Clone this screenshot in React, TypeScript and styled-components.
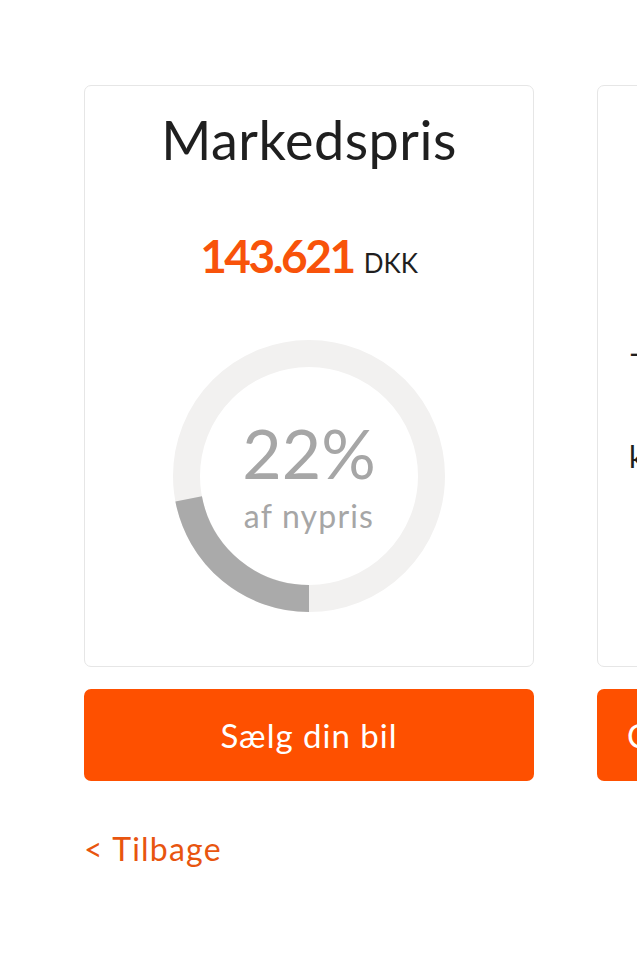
import styled, { createGlobalStyle } from "styled-components";

const GlobalStyle = createGlobalStyle`
  html, body {
    margin: 0;
    padding: 0;
    background: #ffffff;
    overflow: hidden;
  }
  * {
    box-sizing: border-box;
  }
`;

const orange = "#fe5000";

type DonutProps = {
  percent: number;
};

function Donut({ percent }: DonutProps) {
  const size = 272;
  const stroke = 27;
  const r = (size - stroke) / 2;
  const c = 2 * Math.PI * r;
  const filled = (percent / 100) * c;
  return (
    <DonutWrap>
      <svg width={size} height={size} viewBox={`0 0 ${size} ${size}`}>
        <circle
          cx={size / 2}
          cy={size / 2}
          r={r}
          fill="none"
          stroke="#f2f1f0"
          strokeWidth={stroke}
        />
        <circle
          cx={size / 2}
          cy={size / 2}
          r={r}
          fill="none"
          stroke="#aaaaaa"
          strokeWidth={stroke}
          strokeDasharray={`${filled} ${c}`}
          transform={`rotate(90 ${size / 2} ${size / 2})`}
        />
      </svg>
      <DonutLabel>
        <Percent>{percent}%</Percent>
        <Sub>af nypris</Sub>
      </DonutLabel>
    </DonutWrap>
  );
}

function App() {
  return (
    <Page>
      <GlobalStyle />
      <Slider>
        <Column>
          <Card>
            <Title>Markedspris</Title>
            <Price>
              <Amount>143.621</Amount>
              <Currency>DKK</Currency>
            </Price>
            <Donut percent={22} />
          </Card>
          <Button>Sælg din bil</Button>
        </Column>
        <Column>
          <Card>
            <Note $top={228}>- </Note>
            <Note $top={72}>kan vi hjælpe dig</Note>
          </Card>
          <Button $align="left">Check din bil</Button>
        </Column>
      </Slider>
      <Back>&lt; Tilbage</Back>
    </Page>
  );
}

const Page = styled.div`
  width: 637px;
  height: 960px;
  padding: 85px 0 0 84px;
  font-family: "Lato", "Open Sans", sans-serif;
  overflow: hidden;
`;

const Slider = styled.div`
  display: flex;
  gap: 63px;
  width: 1000px;
`;

const Column = styled.div`
  display: flex;
  flex-direction: column;
  gap: 22px;
  width: 450px;
  flex-shrink: 0;
`;

const Card = styled.div`
  height: 582px;
  border: 1.5px solid #e6e6e6;
  border-radius: 7px;
  background: #fff;
  display: flex;
  flex-direction: column;
  align-items: center;
  padding-top: 22px;
`;

const Title = styled.h1`
  margin: 0;
  font-size: 54px;
  line-height: 64px;
  font-weight: 400;
  color: #1f1f1f;
  letter-spacing: 0.5px;
`;

const Price = styled.div`
  margin-top: 56px;
  display: flex;
  align-items: baseline;
  gap: 10px;
  height: 56px;
`;

const Amount = styled.span`
  font-size: 46px;
  font-weight: 700;
  color: #f8530a;
  letter-spacing: -2.5px;
`;

const Currency = styled.span`
  font-size: 26px;
  color: #1f1f1f;
  font-weight: 400;
`;

const DonutWrap = styled.div`
  margin-top: 56px;
  position: relative;
  width: 272px;
  height: 272px;
`;

const DonutLabel = styled.div`
  position: absolute;
  inset: 0;
  display: flex;
  flex-direction: column;
  align-items: center;
  justify-content: center;
  gap: 7px;
  color: #a6a6a6;
`;

const Percent = styled.div`
  font-size: 68px;
  line-height: 72px;
  font-weight: 400;
`;

const Sub = styled.div`
  font-size: 32px;
  line-height: 40px;
  letter-spacing: 1.2px;
`;

const Note = styled.div<{ $top: number }>`
  align-self: flex-start;
  margin-top: ${(p) => p.$top}px;
  padding-left: 31px;
  font-size: 30px;
  line-height: 32px;
  color: #1f1f1f;
  white-space: nowrap;
`;

const Button = styled.div<{ $align?: string }>`
  height: 92px;
  border-radius: 7px;
  background: ${orange};
  color: #fff;
  font-size: 33px;
  display: flex;
  align-items: center;
  justify-content: ${(p) => (p.$align === "left" ? "flex-start" : "center")};
  padding-left: ${(p) => (p.$align === "left" ? "30px" : "0")};
  letter-spacing: 1px;
`;

const Back = styled.a`
  display: inline-block;
  margin-top: 48px;
  font-size: 32px;
  color: #e8550f;
  letter-spacing: 1.2px;
`;

export default App;
